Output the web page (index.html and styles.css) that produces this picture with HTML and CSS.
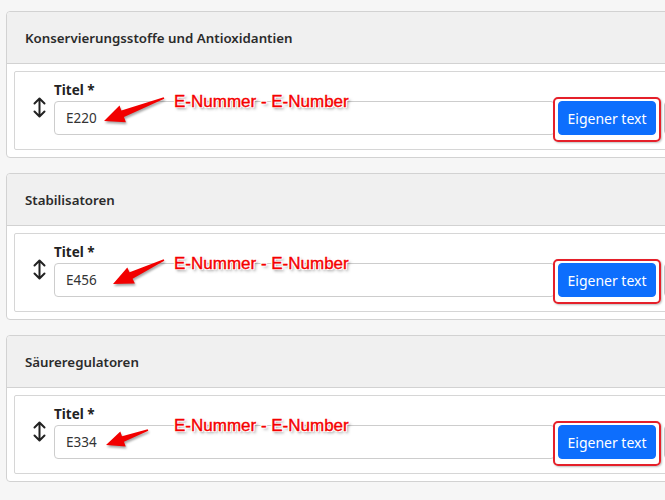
FILE: index.html
```html
<!DOCTYPE html>
<html>
<head>
	<meta charset="utf-8">
	<title>Zusatzstoffe</title>
	<link rel="stylesheet" href="styles.css">
</head>
<body>

	<div class="card">
		<div class="card-header">Konservierungsstoffe und Antioxidantien</div>
		<div class="card-body">
			<div class="item">
				<svg class="handle" viewBox="0 0 15 21"><path d="M7.5 2v17M2.5 6.5l5-5 5 5M2.5 14.5l5 5 5-5"/></svg>
				<div class="field">
					<label class="field-label">Titel *</label>
					<input class="field-input" type="text" value="E220">
				</div>
				<span class="btn-wrap"><button class="btn btn-primary">Eigener text</button><span class="mark-box"></span></span>
				<button class="btn btn-remove"></button>
				<span class="note">E-Nummer - E-Number</span>
				<svg class="note-arrow" viewBox="0 0 200 78"><polygon points="148.7,25.3 106.4,38.5 104.5,33.4 89,49 110.9,50.2 109,45.1 149.3,26.7"/></svg>
			</div>
		</div>
	</div>

	<div class="card">
		<div class="card-header">Stabilisatoren</div>
		<div class="card-body">
			<div class="item">
				<svg class="handle" viewBox="0 0 15 21"><path d="M7.5 2v17M2.5 6.5l5-5 5 5M2.5 14.5l5 5 5-5"/></svg>
				<div class="field">
					<label class="field-label">Titel *</label>
					<input class="field-input" type="text" value="E456">
				</div>
				<span class="btn-wrap"><button class="btn btn-primary">Eigener text</button><span class="mark-box"></span></span>
				<button class="btn btn-remove"></button>
				<span class="note">E-Nummer - E-Number</span>
				<svg class="note-arrow" viewBox="0 0 200 78"><polygon points="148.7,25.3 114.6,38.3 112.3,33.4 98,50 119.9,49.6 117.6,44.7 149.3,26.7"/></svg>
			</div>
		</div>
	</div>

	<div class="card">
		<div class="card-header">Säureregulatoren</div>
		<div class="card-body">
			<div class="item">
				<svg class="handle" viewBox="0 0 15 21"><path d="M7.5 2v17M2.5 6.5l5-5 5 5M2.5 14.5l5 5 5-5"/></svg>
				<div class="field">
					<label class="field-label">Titel *</label>
					<input class="field-input" type="text" value="E334">
				</div>
				<span class="btn-wrap"><button class="btn btn-primary">Eigener text</button><span class="mark-box"></span></span>
				<button class="btn btn-remove"></button>
				<span class="note">E-Nummer - E-Number</span>
				<svg class="note-arrow" viewBox="0 0 200 78"><polygon points="132.7,33.2 107,40.2 105.3,35.5 91,49 110.7,50.5 109,45.8 133.3,34.8"/></svg>
			</div>
		</div>
	</div>

</body>
</html>
```

FILE: styles.css
```css
html {
	overflow: hidden;
}
body {
	margin: 0;
	padding: 11px 0 0 6px;
	background: #f6f6f6;
	font-family: "Noto Sans", "Open Sans", sans-serif;
	font-size: 14px;
	color: #212529;
}
.card {
	width: 720px;
	margin-bottom: 15px;
	background: #fff;
	border: 1px solid #d2d2d2;
	border-radius: 4px;
}
.card-header {
	height: 51px;
	line-height: 52px;
	padding: 0 18px;
	background: #f0f0f0;
	border-bottom: 1px solid #d2d2d2;
	border-radius: 4px 4px 0 0;
	font-size: 13.3px;
	font-weight: 600;
	color: #2b2b2b;
}
.card-body {
	padding: 7px;
}
.item {
	position: relative;
	display: flex;
	align-items: flex-start;
	height: 63px;
	padding: 8px 0 6px 17px;
	border: 1px solid #d6d6d6;
	border-radius: 2px;
}
.handle {
	width: 15px;
	height: 21px;
	margin-top: 17px;
	margin-right: 7px;
	flex: none;
}
.handle path {
	fill: none;
	stroke: #222;
	stroke-width: 2;
	stroke-linecap: round;
	stroke-linejoin: round;
}
.field {
	width: 501px;
	flex: none;
}
.field-label {
	display: block;
	height: 21px;
	line-height: 21px;
	font-size: 13.5px;
	font-weight: 700;
	color: #222;
}
.field-input {
	box-sizing: border-box;
	width: 100%;
	height: 34px;
	padding: 0 11px;
	border: 1px solid #cdcdcd;
	border-radius: 4px;
	font-family: inherit;
	font-size: 13.5px;
	color: #333;
	background: #fff;
}
.btn-wrap {
	position: relative;
	margin: 21px 0 0 3px;
	flex: none;
}
.btn {
	box-sizing: border-box;
	height: 34px;
	border-radius: 4px;
	font-family: inherit;
	font-size: 14px;
	display: block;
}
.btn-primary {
	width: 98px;
	padding: 0;
	background: #0d6efd;
	border: 1px solid #0d6efd;
	color: #fff;
}
.btn-remove {
	width: 34px;
	margin: 21px 0 0 8px;
	background: #fff;
	border: 1px solid #c4c4c4;
}
/* red frame drawn round the button */
.mark-box {
	position: absolute;
	left: -5px;
	top: -4px;
	right: -5px;
	bottom: -7px;
	border: 2px solid #e5202a;
	border-radius: 5px;
	box-shadow: 1px 1px 2px rgba(0, 0, 0, .25);
}
.note {
	position: absolute;
	left: 159px;
	top: 20px;
	font-family: "Liberation Sans", Arial, sans-serif;
	font-size: 17px;
	line-height: 20px;
	color: #f50000;
	white-space: nowrap;
	-webkit-text-stroke: 0.4px #f50000;
	text-shadow: -1px 0 #fff, 1px 0 #fff, 0 -1px #fff, 0 1px #fff, 1px 1px #fff, -1px -1px #fff, 1px -1px #fff, -1px 1px #fff, 2px 2px 3px rgba(0, 0, 0, .5);
}
.note-arrow {
	position: absolute;
	left: 0;
	top: 0;
	width: 200px;
	height: 78px;
	filter: drop-shadow(1px 2px 1px rgba(0, 0, 0, .35));
}
.note-arrow polygon {
	fill: #f20000;
}
```
